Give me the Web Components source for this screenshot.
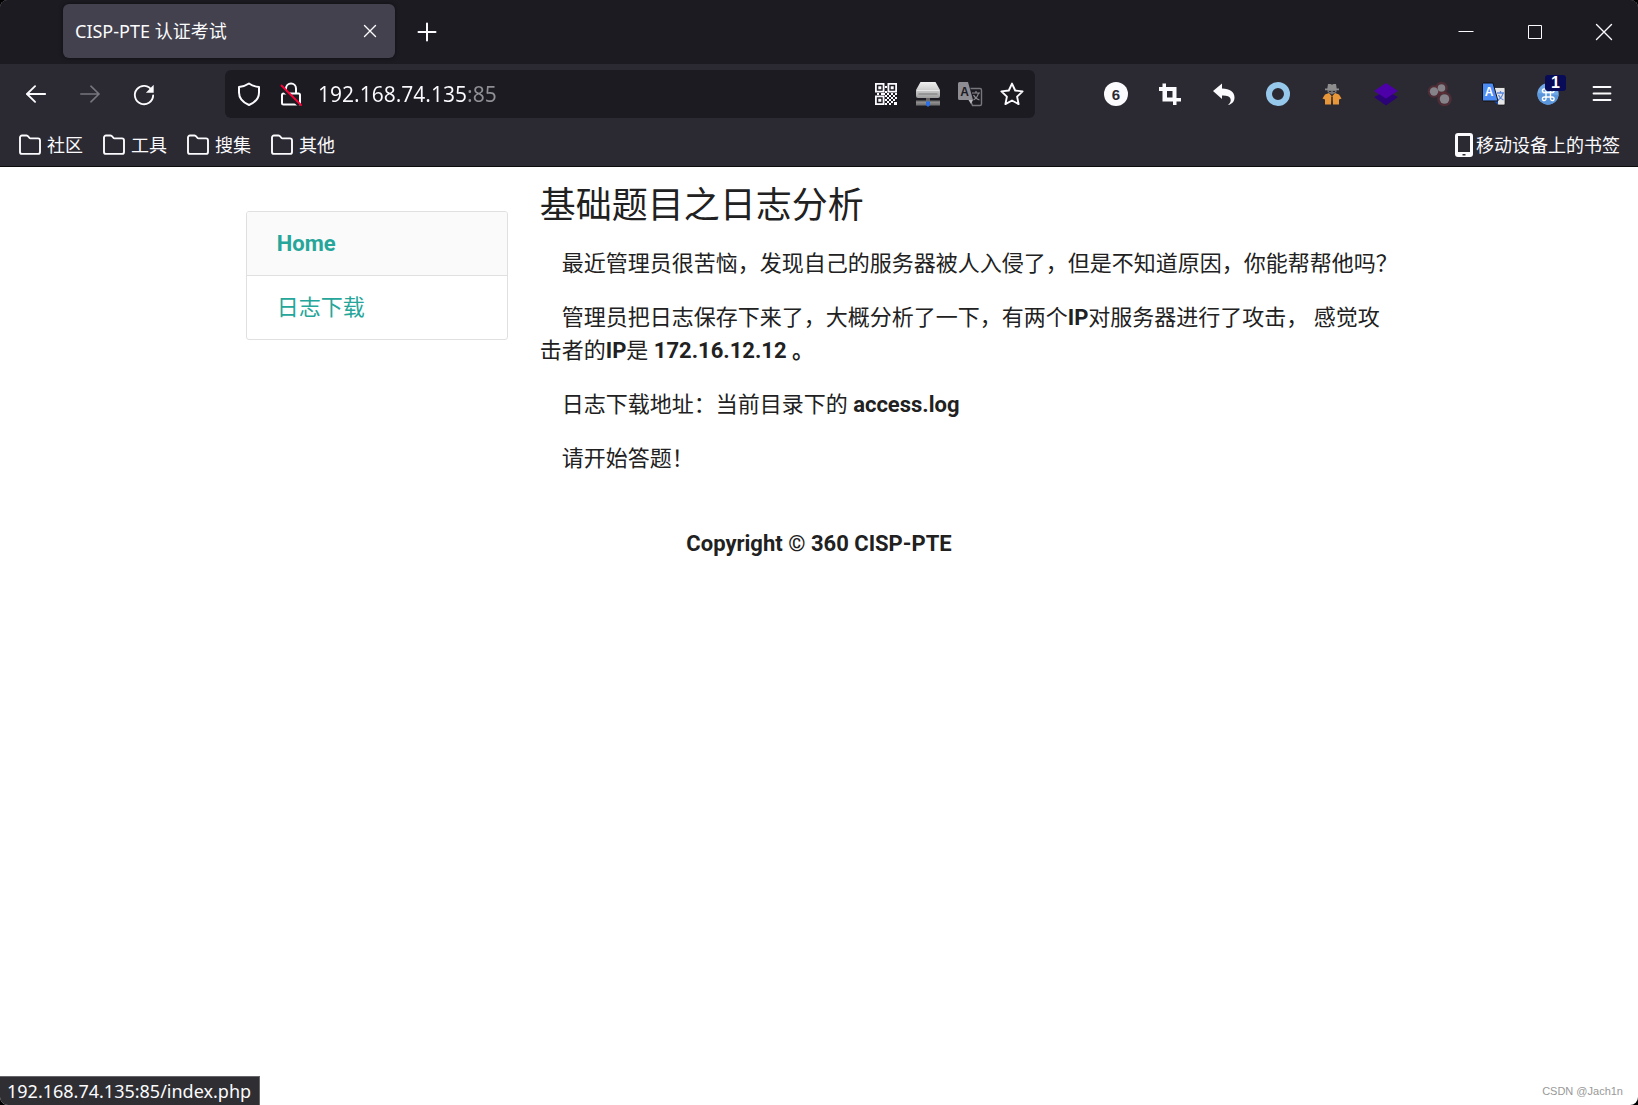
<!DOCTYPE html>
<html lang="zh-CN">
<head>
<meta charset="utf-8">
<title>CISP-PTE 认证考试</title>
<style>
  html { background: #000; }
  body { margin: 0; }
</style>
</head>
<body>
<browser-window>
  <tab-strip slot="chrome"></tab-strip>
  <nav-toolbar slot="chrome"></nav-toolbar>
  <bookmark-bar slot="chrome"></bookmark-bar>
  <exam-page>
    <side-menu slot="side">
      <side-item href="index.php" current>Home</side-item>
      <side-item href="access.log">日志下载</side-item>
    </side-menu>
    <exam-question heading="基础题目之日志分析">
      <p>最近管理员很苦恼，发现自己的服务器被人入侵了，但是不知道原因，你能帮帮他吗？</p>
      <p>管理员把日志保存下来了，大概分析了一下，有两个<b>IP</b>对服务器进行了攻击， 感觉攻击者的<b>IP</b>是 <b>172.16.12.12 。</b></p>
      <p>日志下载地址：当前目录下的 <b>access.log</b></p>
      <p>请开始答题！</p>
    </exam-question>
    <span slot="footer">Copyright © 360 CISP-PTE</span>
  </exam-page>
  <status-label slot="status">192.168.74.135:85/index.php</status-label>
  <span slot="mark">CSDN @Jach1n</span>
</browser-window>

<script>
const define = (name, html, setup) => {
  const template = document.createElement('template');
  template.innerHTML = html;
  customElements.define(name, class extends HTMLElement {
    constructor() {
      super();
      this.attachShadow({ mode: 'open' }).append(template.content.cloneNode(true));
    }
    connectedCallback() { if (setup) setup(this, this.shadowRoot); }
  });
};

/* Every icon is drawn on a 24 × 24 grid. */
const line = (d, w = 2, extra = '') =>
  `<path d="${d}" fill="none" stroke="currentColor" stroke-width="${w}" stroke-linecap="round" stroke-linejoin="round" ${extra}/>`;
const ICONS = {
  back: line('M22 12H2M11 3.500L2.200 12l8.800 8.500'),
  forward: line('M2 12h20M13 3.500l8.800 8.500-8.800 8.500', 1.8),
  reload: line('M20.600 8A10 10 0 1 0 22 13.500', 2) + '<path d="M22.600 2v8.500h-8.500z" fill="currentColor"/>',
  close: line('M6.500 6.500l11 11M17.500 6.500l-11 11', 1.4),
  plus: line('M12 3.500v17M3.500 12h17', 2),
  minimize: '<path d="M4.500 11h15v1h-15z" fill="currentColor"/>',
  maximize: '<path d="M5.500 5.500h13v13h-13z" fill="none" stroke="currentColor"/>',
  exit: line('M4.500 4.500l15 15M19.500 4.500l-15 15', 1.4),
  shield: line('M12 1.500C9 3.600 5.600 4.600 2 4.900v5.600C2 16.500 6 20.500 12 23c6-2.500 10-6.500 10-12.500V4.900C18.400 4.600 15 3.600 12 1.500z'),
  lock: line('M4.500 11.500h15a1.500 1.500 0 0 1 1.500 1.500v8a1.500 1.500 0 0 1-1.500 1.500h-15A1.500 1.500 0 0 1 3 21v-8a1.500 1.500 0 0 1 1.500-1.500M7 11.500V6.500a5 5 0 0 1 10 0v5', 2) +
    '<path d="M2 5.500l18 18" stroke="#1c1b22" stroke-width="3"/><path d="M2.500 3.500l19.500 19.500" stroke="#ff0039" stroke-width="1.800" stroke-linecap="round"/>',
  star: line('M12 1.600l3.200 6.900 7.400.9-5.500 5.200 1.500 7.500L12 18.500l-6.600 3.600 1.500-7.500L1.400 9.400l7.400-.9z', 1.9),
  menu: line('M3.500 5h17M3.500 11.500h17M3.500 18h17', 1.8),
  folder: line('M2 4.500a2 2 0 0 1 2-2h4.500c1 0 1.400.4 2 1.200l.8 1.100c.3.400.7.600 1.200.600H20a2 2 0 0 1 2 2v11.500a2 2 0 0 1-2 2H4a2 2 0 0 1-2-2z', 1.9),
  phone: '<rect x="3" width="18" height="24" rx="3" fill="currentColor"/><path d="M6 3h12v16H6z" fill="#2b2a33"/><path d="M10.500 21h3v1.500h-3z" fill="#2b2a33"/>',
  qr: `<g fill="none" stroke="#fbfbfe" stroke-width="1.800"><path d="M1.900 1.900h7.700v7.700H1.900zM14.400 1.900h7.700v7.700h-7.700zM1.900 14.400h7.700v7.700H1.900z"/></g>
    <g fill="#fbfbfe"><path d="M4.300 4.300h3v3h-3zM16.700 4.300h3v3h-3zM4.300 16.700h3v3h-3z"/>
    <path d="M11 4h2v2h-2zM3 11h2v2H3zM7 11h2v2H7zM11 9h2v2h-2zM9 11h2v2H9zM13 11h2v2h-2zM17 11h2v2h-2zM21 11h2v2h-2zM11 13h2v2h-2zM15 13h2v2h-2zM19 13h2v2h-2zM13 15h2v2h-2zM17 15h2v2h-2zM21 15h2v2h-2zM11 17h2v2h-2zM15 17h2v2h-2zM19 17h2v2h-2zM13 19h2v2h-2zM17 19h2v2h-2zM11 21h2v2h-2zM15 21h2v2h-2zM20 20h3v3h-3z"/></g>`,
  drive: `<defs><linearGradient id="m" x2="0" y2="1"><stop stop-color="#f0f0f0"/><stop offset=".45" stop-color="#d0d0d0"/><stop offset="1" stop-color="#9c9c9c"/></linearGradient></defs>
    <path d="M4.500 0h15L24 8v6a2 2 0 0 1-2 2H2a2 2 0 0 1-2-2V8z" fill="url(#m)"/><path d="M1 8.500h22" stroke="#eee" stroke-width=".8"/><path d="M2.500 12h19" stroke="#8c8c8c" stroke-width="1.500"/>
    <path d="M10 16h4v3h-4z" fill="#666"/><path d="M0 18.500h24v5H0z" fill="#777"/><path d="M0 20.800h24" stroke="#999"/>
    <path d="M10 19.500h4V23l-2 2-2-2z" fill="#2b6fe8"/>`,
  lang: `<path d="M12.500 6.500H22a1.500 1.500 0 0 1 1.500 1.500v14a1.500 1.500 0 0 1-1.500 1.500h-7.500l-2-5" fill="#1c1b22" stroke="#77767c" stroke-width="1.400"/>
    <path d="M1.500 0H10l5 18H1.500A1.500 1.500 0 0 1 0 16.500v-15A1.500 1.500 0 0 1 1.500 0z" fill="#8e8d94"/><path d="M10.500 18H15l-2 4z" fill="#b9b8bd"/>
    <text x="2.200" y="14" font-family="Liberation Sans,sans-serif" font-weight="700" font-size="12" fill="#1c1b22">A</text>
    <path d="M14 11h8M18 9v2M20.500 11c-.6 3-2.500 5.500-5 7M15.500 13c1.500 2.600 3.500 4.300 6 5" fill="none" stroke="#8e8d94" stroke-width="1.200"/>`,
  six: `<circle cx="12" cy="12" r="12" fill="#fbfbfe"/><text x="12" y="17.500" text-anchor="middle" font-family="Liberation Sans,sans-serif" font-weight="700" font-size="15" fill="#2b2a33">6</text>`,
  crop: '<path d="M4.500 1.500H8V5h10.500v11H23v3.500h-4.500V23H15v-3.500H4.500V9H1V5h3.500zM9 9v6.500h5.500V9z" fill="#fbfbfe" fill-rule="evenodd"/>',
  undo: '<path d="M1 9l9-7.500v5C18 6.800 22.500 10 22.500 15.500c0 4-2.500 6.800-6.500 7.500 2.300-2 3.200-4 2.500-6.300-.8-2.400-3.800-3.500-8.500-3.300V17z" fill="#fbfbfe"/>',
  ring: '<circle cx="12" cy="12" r="9" fill="none" stroke="#96c8eb" stroke-width="6"/>',
  agent: `<path d="M5 12.500l4-1.500 3 3.500 3-3.500 4 1.500 2.500 4-2.500 1v5h-6l-1-5-1 5H5v-5l-2.500-1z" fill="#e8963a"/><path d="M12 14.500v8" stroke="#2b2a33" stroke-width="1.500"/>
    <path d="M7.500 7h9v3L12 12.500 7.500 10z" fill="#777"/><path d="M8 2h2.500l1.500.8 1.500-.8H16l.7 4.500H19v1.700H5V6.500h2.300z" fill="#8d8d8d"/><path d="M9 9.500h2.200M12.800 9.500H15" stroke="#2b2a33"/>`,
  layers: '<path d="M0 15l12-6 12 6-12 8.500z" fill="#2c0277"/><path d="M12 1l12 8-12 7.500L0 9z" fill="#4d00a8"/>',
  cookies: '<g fill="none" stroke="#6b3039" stroke-opacity=".55" stroke-width="2.500"><circle cx="13.500" cy="6" r="5"/><circle cx="6" cy="9.500" r="5"/><circle cx="16.500" cy="17" r="6"/></g><g fill="#858389"><circle cx="13.500" cy="6" r="3.800"/><circle cx="6" cy="9.500" r="4.200"/><circle cx="16.500" cy="17" r="4.800"/></g>',
  gtrans: `<path d="M11 5.500h11a1 1 0 0 1 1 1V22a1 1 0 0 1-1 1h-6l-3-5z" fill="#e6e6e8" stroke="#111" stroke-width=".7"/>
    <path d="M15 11h7M18.500 9v2M21 11c-.5 3-2.500 5.500-5 7M16.500 13c1 2.600 2.500 4 5 5" fill="none" stroke="#5b88dc" stroke-width="1.300"/><path d="M11 18h5v5z" fill="#1b4fae"/>
    <path d="M1.500 1H11l5 18H1.500a1 1 0 0 1-1-1V2a1 1 0 0 1 1-1z" fill="#4d8bf5" stroke="#111"/>
    <text x="2.800" y="14" font-family="Liberation Sans,sans-serif" font-weight="700" font-size="12" fill="#fff">A</text>`,
  command: `<circle cx="12" cy="12" r="10.700" fill="#71aae8"/><path d="M1.500 11A10.500 10.500 0 0 0 22.500 13z" fill="#5a96dc"/>
    <path d="M10 10.500h4.500v4.500H10zM10 10.500H8.500A1.800 1.800 0 1 1 10 8.700zM14.500 10.500H16a1.800 1.800 0 1 0-1.500-1.800zM10 15H8.500a1.800 1.800 0 1 0 1.500 1.800zM14.500 15H16a1.800 1.800 0 1 1-1.500 1.800z" fill="none" stroke="#fff" stroke-width="1.400"/>`
};

const drawIcon = (icon, name) => { icon.shadowRoot.querySelector('svg').innerHTML = ICONS[name]; };

define('ui-icon', `
  <style>
    :host { display: block; flex: none; width: 24px; height: 24px; }
    svg { display: block; width: 100%; height: 100%; overflow: visible; }
  </style>
  <svg viewBox="0 0 24 24" aria-hidden="true"></svg>`);

define('tool-button', `
  <style>
    :host { display: block; flex: none; width: 54px; height: 48px; color: #fbfbfe; }
    :host([narrow]) { width: 42px; }
    :host([wide]) { width: 69px; }
    :host([dim]) { color: #77767e; }
    :host([small]) ui-icon { width: 22px; height: 22px; }
    button { all: unset; box-sizing: border-box; width: 100%; height: 100%; display: flex; align-items: center; justify-content: center; position: relative; }
    .badge { position: absolute; top: 5px; right: 9px; width: 21px; height: 16px; border-radius: 3px; background: #070b58;
      font: bold 16px/15px "Liberation Sans", sans-serif; text-align: center; color: #fff; }
    .badge:empty { display: none; }
  </style>
  <button type="button"><ui-icon></ui-icon><span class="badge"></span></button>`,
  (el, root) => {
    drawIcon(root.querySelector('ui-icon'), el.getAttribute('icon'));
    root.querySelector('button').setAttribute('aria-label', el.getAttribute('label'));
    root.querySelector('.badge').textContent = el.getAttribute('badge') || '';
  });

define('browser-window', `
  <style>
    :host { display: flex; flex-direction: column; min-height: 100vh; position: relative; overflow: hidden; border-radius: 8px; background: #fff; }
    header { display: block; border-bottom: 1px solid #0c0c0d; background: #2b2a33; font-family: "Noto Sans", "Noto Sans CJK SC", sans-serif; color: #fbfbfe; }
    main { flex: 1; }
    .status { position: absolute; left: 0; bottom: 0; }
    .mark { position: absolute; right: 15px; bottom: 6px; font: 11px/16px "Liberation Sans", sans-serif; color: #999; }
  </style>
  <header><slot name="chrome"></slot></header>
  <main><slot></slot></main>
  <div class="status"><slot name="status"></slot></div>
  <div class="mark"><slot name="mark"></slot></div>`);

define('tab-strip', `
  <style>
    :host { display: flex; align-items: center; height: 64px; padding-left: 63px; background: #1c1b22; }
    .tab { display: flex; align-items: center; box-sizing: border-box; width: 332px; height: 54px; margin-bottom: 2px; padding-left: 12px; border-radius: 6px; background: #42414d; box-shadow: 0 0 4px #0008; }
    .title { flex: 1; font-size: 18px; line-height: 26px; white-space: nowrap; }
    .close { width: 50px; }
    .space { flex: 1; }
    .new { margin-left: 5px; }
    .controls { display: flex; }
  </style>
  <div class="tab"><span class="title">CISP-PTE 认证考试</span><tool-button class="close" icon="close" label="关闭标签页"></tool-button></div>
  <tool-button class="new" icon="plus" label="新建标签页"></tool-button>
  <span class="space"></span>
  <div class="controls">
    <tool-button wide icon="minimize" label="最小化"></tool-button>
    <tool-button wide icon="maximize" label="最大化"></tool-button>
    <tool-button wide icon="exit" label="关闭"></tool-button>
  </div>`);

define('nav-toolbar', `
  <style>
    :host { display: flex; align-items: center; padding: 6px 9px; }
    .url { flex: 1; min-width: 0; display: flex; align-items: center; height: 48px; margin: 0 54px; padding: 0 2px 0 3px; box-sizing: border-box; border-radius: 6px; background: #1c1b22; }
    input { flex: 1; min-width: 0; height: 34px; margin: 0 0 0 6px; padding: 0; border: 0; outline: 0; font: 21px/34px "Noto Sans", sans-serif;
      color: transparent; -webkit-background-clip: text; background-clip: text;
      background-image: linear-gradient(90deg, #fbfbfe 149px, #8f8f96 149px); caret-color: #fff; }
  </style>
  <tool-button small icon="back" label="后退"></tool-button>
  <tool-button small dim icon="forward" label="前进"></tool-button>
  <tool-button small icon="reload" label="刷新"></tool-button>
  <div class="url">
    <tool-button narrow icon="shield" label="跟踪保护"></tool-button>
    <tool-button narrow icon="lock" label="连接不安全"></tool-button>
    <input type="text" aria-label="地址" value="192.168.74.135:85">
    <tool-button narrow icon="qr" label="二维码"></tool-button>
    <tool-button narrow icon="drive" label="代理"></tool-button>
    <tool-button narrow icon="lang" label="翻译"></tool-button>
    <tool-button narrow icon="star" label="添加书签"></tool-button>
  </div>
  <tool-button icon="six" label="计数"></tool-button>
  <tool-button icon="crop" label="截图"></tool-button>
  <tool-button icon="undo" label="撤销"></tool-button>
  <tool-button icon="ring" label="容器"></tool-button>
  <tool-button icon="agent" label="用户代理"></tool-button>
  <tool-button icon="layers" label="图层"></tool-button>
  <tool-button icon="cookies" label="Cookie"></tool-button>
  <tool-button icon="gtrans" label="翻译"></tool-button>
  <tool-button icon="command" badge="1" label="命令"></tool-button>
  <tool-button icon="menu" label="菜单"></tool-button>`);

define('bookmark-item', `
  <style>
    :host { display: block; }
    button { all: unset; display: flex; align-items: center; gap: 5px; font-size: 18px; line-height: 26px; white-space: nowrap; }
    :host([icon=phone]) button { gap: 0; }
  </style>
  <button type="button"><ui-icon></ui-icon><span><slot></slot></span></button>`,
  (el, root) => drawIcon(root.querySelector('ui-icon'), el.getAttribute('icon')));

define('bookmark-bar', `
  <style>
    :host { display: flex; align-items: center; gap: 19px; height: 42px; padding: 0 18px; }
    .space { flex: 1; }
  </style>
  <bookmark-item icon="folder">社区</bookmark-item>
  <bookmark-item icon="folder">工具</bookmark-item>
  <bookmark-item icon="folder">搜集</bookmark-item>
  <bookmark-item icon="folder">其他</bookmark-item>
  <span class="space"></span>
  <bookmark-item icon="phone">移动设备上的书签</bookmark-item>`);

define('exam-page', `
  <style>
    :host { display: block; font: 22px/33px Roboto, "Noto Sans CJK SC", sans-serif; color: #212121; }
    .row { display: flex; gap: 32px; padding: 0 240px 0 15%; }
    .side { flex: none; width: 262px; padding-top: 44px; }
    .body { flex: 1; min-width: 0; }
    footer { margin-top: 52px; text-align: center; font-weight: 700; }
  </style>
  <div class="row">
    <nav class="side"><slot name="side"></slot></nav>
    <article class="body"><slot></slot></article>
  </div>
  <footer><slot name="footer"></slot></footer>`);

define('side-menu', `
  <style>:host { display: block; border: 1px solid #e0e0e0; border-radius: 3px; overflow: hidden; }</style>
  <slot></slot>`);

define('side-item', `
  <style>
    :host { display: block; }
    :host(:not(:first-child)) { border-top: 1px solid #e0e0e0; }
    a { display: block; padding: 15px 30px; color: #26a69a; text-decoration: none; }
    :host([current]) a { background: #fafafa; font-weight: 700; }
  </style>
  <a><slot></slot></a>`,
  (el, root) => root.querySelector('a').setAttribute('href', el.getAttribute('href')));

define('exam-question', `
  <style>
    :host { display: block; }
    h1 { margin: 18px 0 19px; font-size: 36px; line-height: 43px; font-weight: 400; }
    ::slotted(p) { margin: 0 0 21px; text-indent: 22px; }
    ::slotted(p:last-child) { margin: 0; }
  </style>
  <h1></h1><slot></slot>`,
  (el, root) => { root.querySelector('h1').textContent = el.getAttribute('heading'); });

define('status-label', `
  <style>
    :host { display: block; padding: 0 8px 0 7px; border: solid #66666a; border-width: 1px 1px 0 0; background: #2f2f33; color: #fbfbfe;
      font: 18px/28px "Noto Sans", sans-serif; white-space: nowrap; }
  </style>
  <slot></slot>`);
</script>
</body>
</html>
